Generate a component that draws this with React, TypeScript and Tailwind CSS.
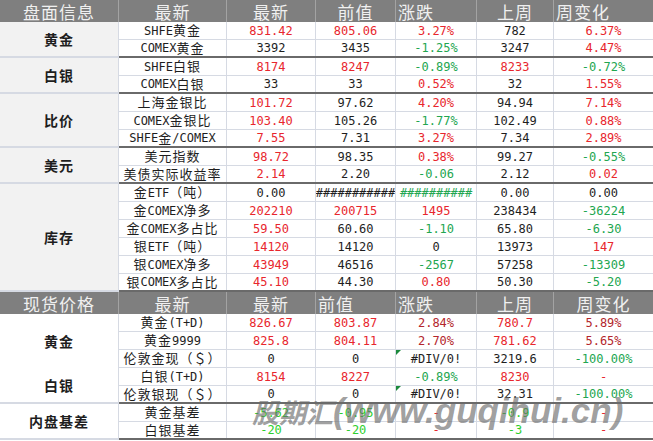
import clsx from "clsx";

const TONE = {
  r: "text-[#e8262d]",
  g: "text-[#22a650]",
  k: "text-[#1e1e1e]",
  d: "text-[#b3262c]",
  l: "text-[#2dcf2d]",
};

type Tone = keyof typeof TONE;
type Row = { name: string; cells: [string, Tone][]; flag?: boolean };
type GroupData = { label: string; rows: Row[]; end: "dark" | "light" };

const COLS = ["w-[119px]", "w-[108px]", "w-[89px]", "w-[80px]", "w-[81px]", "w-[77px]", "w-[99px]"];
const GRID = "border-[#d6dae3]";
const DARK = "border-b-2 border-[#6a6a6a]";

const MARKET: GroupData[] = [
  {
    label: "黄金",
    end: "dark",
    rows: [
      { name: "SHFE黄金", cells: [["831.42", "r"], ["805.06", "r"], ["3.27%", "r"], ["782", "k"], ["6.37%", "r"]] },
      { name: "COMEX黄金", cells: [["3392", "k"], ["3435", "k"], ["-1.25%", "g"], ["3247", "k"], ["4.47%", "r"]] },
    ],
  },
  {
    label: "白银",
    end: "dark",
    rows: [
      { name: "SHFE白银", cells: [["8174", "r"], ["8247", "r"], ["-0.89%", "g"], ["8233", "r"], ["-0.72%", "g"]] },
      { name: "COMEX白银", cells: [["33", "k"], ["33", "k"], ["0.52%", "r"], ["32", "k"], ["1.55%", "r"]] },
    ],
  },
  {
    label: "比价",
    end: "dark",
    rows: [
      { name: "上海金银比", cells: [["101.72", "r"], ["97.62", "k"], ["4.20%", "r"], ["94.94", "k"], ["7.14%", "r"]] },
      { name: "COMEX金银比", cells: [["103.40", "r"], ["105.26", "k"], ["-1.77%", "g"], ["102.49", "k"], ["0.88%", "r"]] },
      { name: "SHFE金/COMEX", cells: [["7.55", "r"], ["7.31", "k"], ["3.27%", "r"], ["7.34", "k"], ["2.89%", "r"]] },
    ],
  },
  {
    label: "美元",
    end: "dark",
    rows: [
      { name: "美元指数", cells: [["98.72", "r"], ["98.35", "k"], ["0.38%", "r"], ["99.27", "k"], ["-0.55%", "g"]] },
      { name: "美债实际收益率", cells: [["2.14", "r"], ["2.20", "k"], ["-0.06", "g"], ["2.12", "k"], ["0.02", "r"]] },
    ],
  },
  {
    label: "库存",
    end: "dark",
    rows: [
      { name: "金ETF（吨）", cells: [["0.00", "k"], ["###########", "k"], ["##########", "g"], ["0.00", "k"], ["0.00", "k"]] },
      { name: "金COMEX净多", cells: [["202210", "r"], ["200715", "r"], ["1495", "r"], ["238434", "k"], ["-36224", "g"]] },
      { name: "金COMEX多占比", cells: [["59.50", "r"], ["60.60", "k"], ["-1.10", "g"], ["65.80", "k"], ["-6.30", "g"]] },
      { name: "银ETF（吨）", cells: [["14120", "r"], ["14120", "k"], ["0", "k"], ["13973", "k"], ["147", "r"]] },
      { name: "银COMEX净多", cells: [["43949", "r"], ["46516", "k"], ["-2567", "g"], ["57258", "k"], ["-13309", "g"]] },
      { name: "银COMEX多占比", cells: [["45.10", "r"], ["44.30", "k"], ["0.80", "r"], ["50.30", "k"], ["-5.20", "g"]] },
    ],
  },
];

const SPOT: GroupData[] = [
  {
    label: "黄金",
    end: "light",
    rows: [
      { name: "黄金(T+D)", cells: [["826.67", "r"], ["803.87", "r"], ["2.84%", "d"], ["780.7", "r"], ["5.89%", "d"]] },
      { name: "黄金9999", cells: [["825.8", "r"], ["804.11", "r"], ["2.70%", "d"], ["781.62", "r"], ["5.65%", "d"]] },
      { name: "伦敦金现（＄）", flag: true, cells: [["0", "k"], ["0", "k"], ["#DIV/0!", "k"], ["3219.6", "k"], ["-100.00%", "g"]] },
    ],
  },
  {
    label: "白银",
    end: "dark",
    rows: [
      { name: "白银(T+D)", cells: [["8154", "r"], ["8227", "r"], ["-0.89%", "g"], ["8230", "r"], ["-", "r"]] },
      { name: "伦敦银现（＄）", flag: true, cells: [["0", "k"], ["0", "k"], ["#DIV/0!", "k"], ["32.31", "k"], ["-100.00%", "g"]] },
    ],
  },
  {
    label: "内盘基差",
    end: "dark",
    rows: [
      { name: "黄金基差", cells: [["-5.62", "l"], ["-0.95", "l"], ["-", "r"], ["-0.9", "l"], ["-", "r"]] },
      { name: "白银基差", cells: [["-20", "l"], ["-20", "l"], ["-", "r"], ["-3", "l"], ["-", "r"]] },
    ],
  },
];

// CJK runs get a slightly larger, spaced size so they sit next to the mono digits like the sheet does
function Mixed({ text }: { text: string }) {
  const parts = text.split(/([\u3000-\u9fff\uff00-\uffef]+)/);
  return (
    <>
      {parts.map((p, i) =>
        i % 2 ? (
          <span key={i} className="text-[13px] tracking-[1px]">
            {p}
          </span>
        ) : (
          p
        ),
      )}
    </>
  );
}

function Header({ labels, left }: { labels: string[]; left: number[] }) {
  return (
    <div className="flex h-[22px] bg-[#7f7f7f] font-['Noto_Sans_CJK_SC',sans-serif] text-[17px] leading-none tracking-[1px] text-[#f0f0f0]">
      {labels.map((label, i) => (
        <div
          key={i}
          className={clsx(
            COLS[i],
            "flex items-center",
            left.includes(i) ? "justify-start pl-[2px]" : "justify-center",
            i < 6 && "border-r border-[#a3a3a3]",
          )}
        >
          {label}
        </div>
      ))}
    </div>
  );
}

function Group({ label, rows, end, bg }: GroupData & { bg: string }) {
  return (
    <div className="flex">
      <div
        className={clsx(
          COLS[0],
          bg,
          "flex items-center justify-center border-r font-['Noto_Sans_CJK_SC',sans-serif] text-[14px] font-bold tracking-[1px] text-[#1e1e1e]",
          GRID,
          end === "dark" && DARK,
        )}
      >
        {label}
      </div>
      <div className="flex flex-col">
        {rows.map((row, r) => (
          <div
            key={row.name}
            className={clsx("flex h-[18px]", r === rows.length - 1 && end === "dark" ? DARK : clsx("border-b", GRID))}
          >
            <div className={clsx(COLS[1], "flex items-center justify-center whitespace-nowrap border-r text-[#1e1e1e]", GRID)}>
              <Mixed text={row.name} />
            </div>
            {row.cells.map(([value, tone], i) => (
              <div
                key={i}
                className={clsx(
                  COLS[i + 2],
                  "relative flex items-center justify-center overflow-hidden whitespace-nowrap",
                  i < 4 && clsx("border-r", GRID),
                  TONE[tone],
                )}
              >
                {row.flag && i === 2 && (
                  <span className="absolute left-0 top-0 h-0 w-0 border-r-[5px] border-t-[5px] border-r-transparent border-t-[#1c8a3c]" />
                )}
                {value}
              </div>
            ))}
          </div>
        ))}
      </div>
    </div>
  );
}

export default function App() {
  return (
    <div className="relative h-[441px] w-[653px] overflow-hidden bg-white font-['DejaVu_Sans_Mono','Noto_Sans_CJK_SC',monospace] text-[12px] leading-none">
      <Header labels={["盘面信息", "最新", "最新", "前值", "涨跌", "上周", "周变化"]} left={[4, 6]} />
      {MARKET.map((g) => (
        <Group key={g.label} {...g} bg="bg-[#f2f2f2]" />
      ))}
      <Header labels={["现货价格", "最新", "最新", "前值", "涨跌", "上周", "周变化"]} left={[3, 4]} />
      {SPOT.map((g) => (
        <Group key={g.label} {...g} bg="bg-white" />
      ))}

      <div className="pointer-events-none absolute left-[252px] top-[393px] flex items-baseline font-bold italic leading-none text-[#6a6a6a]/65">
        <span className="font-['Noto_Sans_CJK_SC',sans-serif] text-[27px]">股期汇</span>
        <span className="font-['Liberation_Sans',sans-serif] text-[35px]">(www.guqihui.cn)</span>
      </div>
    </div>
  );
}
